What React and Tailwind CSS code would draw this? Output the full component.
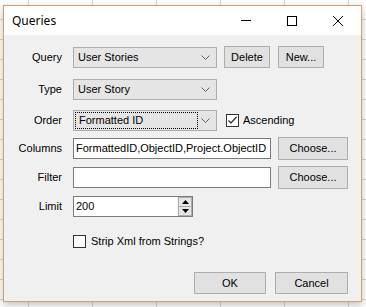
import React from "react";

const Chevron = () => (
  <svg width="9" height="5" viewBox="0 0 9 5" className="shrink-0">
    <path d="M0.5 0.5 L4.5 4.5 L8.5 0.5" fill="none" stroke="#606060" strokeWidth="1" />
  </svg>
);

const Combo = ({ value, focused }) => (
  <div className="flex items-center w-[144px] h-[21px] bg-[#e5e5e5] border border-[#adadad] pl-[1px] pr-[4px]">
    <div
      className={`flex items-center flex-1 h-[17px] pl-[3px] ${
        focused ? "border border-dotted border-black" : ""
      }`}
    >
      {value}
    </div>
    <div className="flex w-[14px] justify-center">
      <Chevron />
    </div>
  </div>
);

const Button = ({ children, className }) => (
  <div
    className={`flex items-center justify-center bg-[#e1e1e1] border border-[#adadad] ${className}`}
  >
    {children}
  </div>
);

const Checkbox = ({ checked }) => (
  <div className="w-[13px] h-[13px] border border-[#333333] bg-white flex items-center justify-center shrink-0">
    {checked && (
      <svg width="11" height="11" viewBox="0 0 11 11">
        <path d="M1.5 5.5 L4 8 L9.5 2" fill="none" stroke="#222" strokeWidth="1.2" />
      </svg>
    )}
  </div>
);

const Label = ({ children }) => (
  <div className="w-[58px] text-right mr-[11px]">{children}</div>
);

export default function App() {
  return (
    <div className="w-[366px] h-[307px] overflow-hidden bg-white pl-[3px] pt-[5px] [background-image:linear-gradient(to_right,#d6d6d6_1px,transparent_1px),linear-gradient(to_bottom,#d6d6d6_1px,transparent_1px)] [background-size:64px_20px] [background-position:28px_19px]">
      <div className="w-[359px] h-[297px] border border-[#d1a06c] bg-[#f0f0f0] flex flex-col shadow-[0_3px_8px_rgba(0,0,0,0.25)]">
        {/* Title bar */}
        <div className="h-[29px] bg-white flex items-center shrink-0">
          <div className="pl-[8px] flex-1 text-[12px] text-black font-['Noto_Sans',sans-serif]">
            Queries
          </div>
          <div className="flex h-full">
            <div className="w-[46px] flex items-center justify-center">
              <div className="w-[10px] h-px bg-black" />
            </div>
            <div className="w-[46px] flex items-center justify-center">
              <div className="w-[10px] h-[10px] border border-black" />
            </div>
            <div className="w-[46px] flex items-center justify-center">
              <svg width="10" height="10" viewBox="0 0 10 10">
                <path d="M0 0 L10 10 M10 0 L0 10" stroke="#000" strokeWidth="1" />
              </svg>
            </div>
          </div>
        </div>

        {/* Body */}
        <div className="flex flex-col pt-[11px] text-[11px] text-black font-['Liberation_Sans',Arial,sans-serif]">
          <div className="flex items-center h-[22px]">
            <Label>Query</Label>
            <Combo value="User Stories" />
            <Button className="w-[46px] h-[22px] ml-[7px]">Delete</Button>
            <Button className="w-[46px] h-[22px] ml-[8px]">New...</Button>
          </div>

          <div className="flex items-center h-[21px] mt-[11px]">
            <Label>Type</Label>
            <Combo value="User Story" />
          </div>

          <div className="flex items-center h-[21px] mt-[10px]">
            <Label>Order</Label>
            <Combo value="Formatted ID" focused />
            <div className="ml-[9px] flex items-center gap-[4px]">
              <Checkbox checked />
              <span>Ascending</span>
            </div>
          </div>

          <div className="flex items-center h-[23px] mt-[6px]">
            <Label>Columns</Label>
            <div className="w-[198px] h-[21px] bg-white border border-[#7a7a7a] flex items-center pl-[2px] overflow-hidden whitespace-nowrap">
              FormattedID,ObjectID,Project.ObjectID
            </div>
            <Button className="w-[70px] h-[23px] ml-[7px]">Choose...</Button>
          </div>

          <div className="flex items-center h-[23px] mt-[6px]">
            <Label>Filter</Label>
            <div className="w-[198px] h-[21px] bg-white border border-[#7a7a7a]" />
            <Button className="w-[70px] h-[23px] ml-[7px]">Choose...</Button>
          </div>

          <div className="flex items-center h-[21px] mt-[7px]">
            <Label>Limit</Label>
            <div className="w-[120px] h-[21px] bg-white border border-[#7a7a7a] flex">
              <div className="flex-1 flex items-center pl-[2px]">200</div>
              <div className="w-[15px] flex flex-col border-l border-[#f0f0f0]">
                <div className="flex-1 bg-[#e5e5e5] border border-[#adadad] flex items-center justify-center">
                  <svg width="7" height="4" viewBox="0 0 7 4">
                    <path d="M0 4 L3.5 0 L7 4 Z" fill="#000" />
                  </svg>
                </div>
                <div className="flex-1 bg-[#e5e5e5] border border-t-0 border-[#adadad] flex items-center justify-center">
                  <svg width="7" height="4" viewBox="0 0 7 4">
                    <path d="M0 0 L3.5 4 L7 0 Z" fill="#000" />
                  </svg>
                </div>
              </div>
            </div>
          </div>

          <div className="flex items-center h-[15px] mt-[17px] pl-[69px] gap-[5px]">
            <Checkbox />
            <span>Strip Xml from Strings?</span>
          </div>

          <div className="flex justify-end h-[22px] mt-[23px] pr-[13px] gap-[9px]">
            <Button className="w-[72px] h-[22px]">OK</Button>
            <Button className="w-[73px] h-[22px]">Cancel</Button>
          </div>
        </div>
      </div>
    </div>
  );
}
